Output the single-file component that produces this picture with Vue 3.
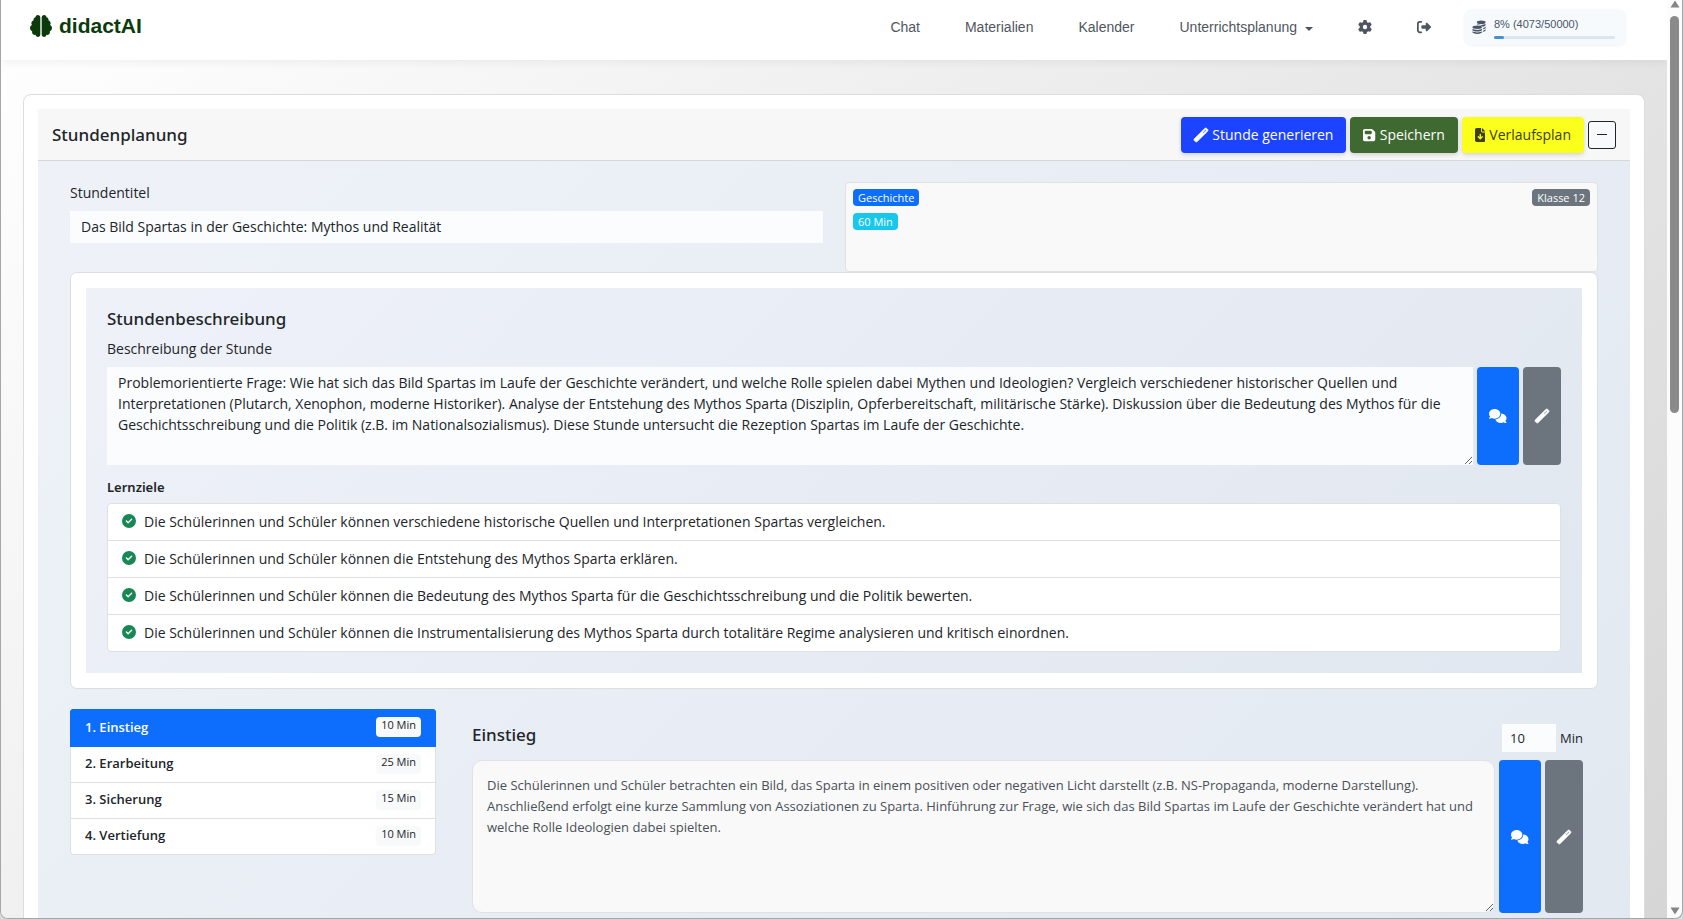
<script setup>
import { ref } from 'vue'

const icons = {
  brain: { box: '0 0 512 512', d: 'M184 0c30.9 0 56 25.1 56 56V456c0 30.9-25.1 56-56 56c-28.9 0-52.7-21.9-55.7-50.1c-5.2 1.4-10.7 2.1-16.3 2.1c-35.3 0-64-28.7-64-64c0-7.4 1.3-14.6 3.6-21.2C21.4 367.4 0 338.2 0 304c0-31.9 18.7-59.5 45.8-72.3C37.1 220.8 32 207 32 192c0-30.7 21.6-56.3 50.4-62.6C80.8 123.9 80 118 80 112c0-29.9 20.6-55.1 48.3-62.1C131.3 21.9 155.1 0 184 0zM328 0c28.9 0 52.6 21.9 55.7 49.9c27.8 7 48.3 32.1 48.3 62.1c0 6-.8 11.9-2.4 17.4c28.8 6.2 50.4 31.9 50.4 62.6c0 15-5.1 28.8-13.8 39.7C493.3 244.5 512 272.1 512 304c0 34.2-21.4 63.4-51.6 74.8c2.3 6.6 3.6 13.8 3.6 21.2c0 35.3-28.7 64-64 64c-5.6 0-11.1-.7-16.3-2.1c-3 28.2-26.8 50.1-55.7 50.1c-30.9 0-56-25.1-56-56V56c0-30.9 25.1-56 56-56z' },
  gear: { box: '0 0 512 512', d: 'M495.9 166.6c3.2 8.7 .5 18.4-6.4 24.6l-43.3 39.4c1.1 8.3 1.7 16.8 1.7 25.4s-.6 17.1-1.7 25.4l43.3 39.4c6.9 6.2 9.6 15.9 6.4 24.6c-4.4 11.9-9.7 23.3-15.8 34.3l-4.7 8.1c-6.6 11-14 21.4-22.1 31.2c-5.9 7.2-15.7 9.6-24.5 6.8l-55.7-17.7c-13.4 10.3-28.2 18.9-44 25.4l-12.5 57.1c-2 9.1-9 16.3-18.2 17.8c-13.8 2.3-28 3.5-42.5 3.5s-28.7-1.2-42.5-3.5c-9.2-1.5-16.2-8.7-18.2-17.8l-12.5-57.1c-15.8-6.5-30.6-15.1-44-25.4L83.1 425.9c-8.8 2.8-18.6 .3-24.5-6.8c-8.1-9.8-15.5-20.2-22.1-31.2l-4.7-8.1c-6.1-11-11.4-22.4-15.8-34.3c-3.2-8.7-.5-18.4 6.4-24.6l43.3-39.4C64.6 273.1 64 264.6 64 256s.6-17.1 1.7-25.4L22.4 191.2c-6.9-6.2-9.6-15.9-6.4-24.6c4.4-11.9 9.7-23.3 15.8-34.3l4.7-8.1c6.6-11 14-21.4 22.1-31.2c5.9-7.2 15.7-9.6 24.5-6.8l55.7 17.7c13.4-10.3 28.2-18.9 44-25.4l12.5-57.1c2-9.1 9-16.3 18.2-17.8C227.3 1.2 241.5 0 256 0s28.7 1.2 42.5 3.5c9.2 1.5 16.2 8.7 18.2 17.8l12.5 57.1c15.8 6.5 30.6 15.1 44 25.4l55.7-17.7c8.8-2.8 18.6-.3 24.5 6.8c8.1 9.8 15.5 20.2 22.1 31.2l4.7 8.1c6.1 11 11.4 22.4 15.8 34.3zM256 336a80 80 0 1 0 0-160 80 80 0 1 0 0 160z' },
  logout: { box: '0 0 512 512', d: 'M377.9 105.9L500.7 228.7c7.2 7.2 11.3 17.1 11.3 27.3s-4.1 20.1-11.3 27.3L377.9 406.1c-6.4 6.4-15 9.9-24 9.9c-18.7 0-33.9-15.2-33.9-33.9l0-62.1-128 0c-17.7 0-32-14.3-32-32l0-64c0-17.7 14.3-32 32-32l128 0 0-62.1c0-18.7 15.2-33.9 33.9-33.9c9 0 17.6 3.6 24 9.9zM160 96L96 96c-17.7 0-32 14.3-32 32l0 256c0 17.7 14.3 32 32 32l64 0c17.7 0 32 14.3 32 32s-14.3 32-32 32l-64 0c-53 0-96-43-96-96L0 128C0 75 43 32 96 32l64 0c17.7 0 32 14.3 32 32s-14.3 32-32 32z' },
  save: { box: '0 0 448 512', d: 'M64 32C28.7 32 0 60.7 0 96V416c0 35.3 28.7 64 64 64H384c35.3 0 64-28.7 64-64V173.3c0-17-6.7-33.3-18.7-45.3L352 50.7C340 38.7 323.7 32 306.7 32H64zm0 96c0-17.7 14.3-32 32-32H288c17.7 0 32 14.3 32 32v64c0 17.7-14.3 32-32 32H96c-17.7 0-32-14.3-32-32V128zM224 288a64 64 0 1 1 0 128 64 64 0 1 1 0-128z' },
  file: { box: '0 0 384 512', d: 'M64 0C28.7 0 0 28.7 0 64V448c0 35.3 28.7 64 64 64H320c35.3 0 64-28.7 64-64V160H256c-17.7 0-32-14.3-32-32V0H64zM256 0V128H384L256 0zM216 232V334.1l31-31c9.4-9.4 24.6-9.4 33.9 0s9.4 24.6 0 33.9l-72 72c-9.4 9.4-24.6 9.4-33.9 0l-72-72c-9.4-9.4-9.4-24.6 0-33.9s24.6-9.4 33.9 0l31 31V232c0-13.3 10.7-24 24-24s24 10.7 24 24z' },
  wand: { box: '0 0 512 512', d: 'M14.1 463.3c-18.7-18.7-18.7-49.1 0-67.9L395.4 14.1c18.7-18.7 49.1-18.7 67.9 0l34.6 34.6c18.7 18.7 18.7 49.1 0 67.9L116.5 497.9c-18.7 18.7-49.1 18.7-67.9 0L14.1 463.3zM347.6 187.6l105-105L429.4 59.3l-105 105 23.3 23.3z' },
  chat: { box: '0 0 640 512', d: 'M208 352c114.9 0 208-78.8 208-176S322.9 0 208 0S0 78.8 0 176c0 38.6 14.7 74.3 39.6 103.4c-3.5 9.4-8.7 17.7-14.2 24.7c-4.8 6.2-9.7 11-13.3 14.3c-1.8 1.6-3.3 2.9-4.3 3.7c-.5 .4-.9 .7-1.1 .8l-.2 .2C1 327.2-1.4 334.4 .8 340.9S9.1 352 16 352c21.8 0 43.8-5.6 62.1-12.5c9.2-3.5 17.8-7.4 25.3-11.4C134.1 343.3 169.8 352 208 352zM448 176c0 112.3-99.1 196.9-216.5 207C255.8 457.4 336.4 512 432 512c38.2 0 73.9-8.7 104.7-23.9c7.5 4 16 7.9 25.2 11.4c18.3 6.9 40.3 12.5 62.1 12.5c6.9 0 13.1-4.5 15.2-11.1c2.1-6.6-.2-13.8-5.8-17.9l-.2-.2c-.2-.2-.6-.4-1.1-.8c-1-.8-2.5-2-4.3-3.7c-3.6-3.3-8.5-8.1-13.3-14.3c-5.5-7-10.7-15.4-14.2-24.7c24.9-29 39.6-64.7 39.6-103.4c0-92.8-84.9-168.9-192.6-175.5c.4 5.1 .6 10.3 .6 15.5z' },
  check: { box: '0 0 512 512', d: 'M256 512A256 256 0 1 0 256 0a256 256 0 1 0 0 512zM369 209L241 337c-9.4 9.4-24.6 9.4-33.9 0l-64-64c-9.4-9.4-9.4-24.6 0-33.9s24.6-9.4 33.9 0l47 47L335 175c9.4-9.4 24.6-9.4 33.9 0s9.4 24.6 0 33.9z' }
}

const goals = [
  'Die Schülerinnen und Schüler können verschiedene historische Quellen und Interpretationen Spartas vergleichen.',
  'Die Schülerinnen und Schüler können die Entstehung des Mythos Sparta erklären.',
  'Die Schülerinnen und Schüler können die Bedeutung des Mythos Sparta für die Geschichtsschreibung und die Politik bewerten.',
  'Die Schülerinnen und Schüler können die Instrumentalisierung des Mythos Sparta durch totalitäre Regime analysieren und kritisch einordnen.'
]

const phases = [
  { name: '1. Einstieg', minutes: 10 },
  { name: '2. Erarbeitung', minutes: 25 },
  { name: '3. Sicherung', minutes: 15 },
  { name: '4. Vertiefung', minutes: 10 }
]
const active = ref(0)

const title = ref('Das Bild Spartas in der Geschichte: Mythos und Realität')
const description = ref('Problemorientierte Frage: Wie hat sich das Bild Spartas im Laufe der Geschichte verändert, und welche Rolle spielen dabei Mythen und Ideologien? Vergleich verschiedener historischer Quellen und Interpretationen (Plutarch, Xenophon, moderne Historiker). Analyse der Entstehung des Mythos Sparta (Disziplin, Opferbereitschaft, militärische Stärke). Diskussion über die Bedeutung des Mythos für die Geschichtsschreibung und die Politik (z.B. im Nationalsozialismus). Diese Stunde untersucht die Rezeption Spartas im Laufe der Geschichte.')
const phaseText = ref('Die Schülerinnen und Schüler betrachten ein Bild, das Sparta in einem positiven oder negativen Licht darstellt (z.B. NS-Propaganda, moderne Darstellung). Anschließend erfolgt eine kurze Sammlung von Assoziationen zu Sparta. Hinführung zur Frage, wie sich das Bild Spartas im Laufe der Geschichte verändert hat und welche Rolle Ideologien dabei spielten.')
const duration = ref('10')

const used = 4073
const quota = 50000
const percent = Math.round((used / quota) * 100)
</script>

<template>
  <div class="window">
    <div class="page">
      <header class="navbar">
        <a class="brand" href="#">
          <svg class="brand-icon" :viewBox="icons.brain.box" aria-hidden="true"><path :d="icons.brain.d" /></svg>
          <span>didactAI</span>
        </a>
        <nav class="menu">
          <a href="#">Chat</a>
          <a href="#">Materialien</a>
          <a href="#">Kalender</a>
          <a href="#" class="dropdown">Unterrichtsplanung<span class="caret"></span></a>
          <a href="#" aria-label="Einstellungen"><svg class="icon" :viewBox="icons.gear.box"><path :d="icons.gear.d" /></svg></a>
          <a href="#" aria-label="Abmelden"><svg class="icon" :viewBox="icons.logout.box"><path :d="icons.logout.d" /></svg></a>
        </nav>
        <div class="quota">
          <svg class="icon" viewBox="0 0 16 16" aria-hidden="true">
            <ellipse cx="10.5" cy="2.6" rx="5" ry="2.1" />
            <path d="M15.5 4.3v1.4c0 1-1.3 1.7-3.2 2.1-.9-1.4-3.1-2-5.3-2.1-.9-.4-1.4-.9-1.5-1.4 1 .9 3 1.3 5 1.3s4-.4 5-1.3z" />
            <path d="M15.5 7.4v1.4c0 .9-1 1.5-2.7 1.9V9.1c1.2-.3 2.2-.9 2.7-1.7z" />
            <path d="M15.5 10.4v1.4c0 .9-1 1.5-2.7 1.9v-1.6c1.2-.3 2.2-.9 2.7-1.7z" />
            <ellipse cx="6" cy="8.3" rx="5.5" ry="1.9" />
            <path d="M.5 10c1.1.9 3.3 1.3 5.5 1.3s4.4-.4 5.5-1.3v1.3c0 1-2.5 1.8-5.5 1.8S.5 12.3.5 11.3z" />
            <path d="M.5 12.9c1.1.9 3.3 1.3 5.5 1.3s4.4-.4 5.5-1.3v1.2c0 1-2.5 1.8-5.5 1.8S.5 15.1.5 14.1z" />
          </svg>
          <div class="quota-info">
            <span>{{ percent }}% ({{ used }}/{{ quota }})</span>
            <div class="track"><div class="fill" :style="{ width: percent + '%' }"></div></div>
          </div>
        </div>
      </header>

      <main class="card">
        <div class="card-header">
          <h1>Stundenplanung</h1>
          <div class="actions">
            <button type="button" class="btn generate"><svg class="wand" :viewBox="icons.wand.box"><path :d="icons.wand.d" /></svg>Stunde generieren</button>
            <button type="button" class="btn save"><svg :viewBox="icons.save.box"><path :d="icons.save.d" /></svg>Speichern</button>
            <button type="button" class="btn plan"><svg :viewBox="icons.file.box"><path :d="icons.file.d" /></svg>Verlaufsplan</button>
            <button type="button" class="collapse" aria-label="Einklappen"><span></span></button>
          </div>
        </div>

        <div class="card-body">
          <div class="top-row">
            <div class="field">
              <label for="title">Stundentitel</label>
              <input id="title" v-model="title" type="text" />
            </div>
            <div class="meta">
              <div class="meta-line">
                <span class="badge subject">Geschichte</span>
                <span class="badge grade">Klasse 12</span>
              </div>
              <div class="meta-line"><span class="badge length">60 Min</span></div>
            </div>
          </div>

          <section class="inner-card">
            <div class="inner-body">
              <h2>Stundenbeschreibung</h2>
              <label for="description">Beschreibung der Stunde</label>
              <div class="editor">
                <textarea id="description" v-model="description" class="plain" spellcheck="false"></textarea>
                <button type="button" class="side chat" aria-label="Chat öffnen"><svg :viewBox="icons.chat.box"><path :d="icons.chat.d" /></svg></button>
                <button type="button" class="side edit" aria-label="Bearbeiten"><svg class="wand" :viewBox="icons.wand.box"><path :d="icons.wand.d" /></svg></button>
              </div>
              <h3>Lernziele</h3>
              <ul class="goals">
                <li v-for="goal in goals" :key="goal">
                  <svg :viewBox="icons.check.box" aria-hidden="true"><path :d="icons.check.d" /></svg>
                  <span>{{ goal }}</span>
                </li>
              </ul>
            </div>
          </section>

          <div class="phase-row">
            <div class="phases">
              <button
                v-for="(phase, i) in phases"
                :key="phase.name"
                type="button"
                :class="{ active: i === active }"
                @click="active = i"
              >
                <span>{{ phase.name }}</span>
                <span class="minutes">{{ phase.minutes }} Min</span>
              </button>
            </div>
            <section class="detail">
              <div class="detail-head">
                <h2><label for="phase-text">Einstieg</label></h2>
                <div class="duration">
                  <input id="duration" v-model="duration" type="text" inputmode="numeric" />
                  <label for="duration">Min</label>
                </div>
              </div>
              <div class="editor phase-editor">
                <textarea id="phase-text" v-model="phaseText" class="rounded" spellcheck="false"></textarea>
                <button type="button" class="side chat" aria-label="Chat öffnen"><svg :viewBox="icons.chat.box"><path :d="icons.chat.d" /></svg></button>
                <button type="button" class="side edit" aria-label="Bearbeiten"><svg class="wand" :viewBox="icons.wand.box"><path :d="icons.wand.d" /></svg></button>
              </div>
            </section>
          </div>
        </div>
      </main>
    </div>

    <div class="scrollbar" aria-hidden="true">
      <svg viewBox="0 0 10 8"><path d="M5 .5 9.5 7.5H.5z" /></svg>
      <div class="rail"><div class="thumb"></div></div>
      <svg viewBox="0 0 10 8"><path d="M5 7.5 9.5.5H.5z" /></svg>
    </div>
  </div>
</template>

<style>
html,
body {
  margin: 0;
  background: #d9dadb;
}
</style>

<style scoped>
* {
  box-sizing: border-box;
}

.window {
  display: flex;
  height: 100vh;
  overflow: hidden;
  border: 1px solid #a5a6a8;
  border-top: 0;
  border-radius: 0 0 8px 8px;
  background: #fcfcfc;
  color: #212529;
  font-family: "Open Sans", "Noto Sans", sans-serif;
  font-size: 14px;
  line-height: 21px;
}

.page {
  flex: 1;
  min-width: 0;
  overflow: hidden;
  background: linear-gradient(135deg, #ffffff 0%, #d6d6d6 100%);
}

h1,
h2,
h3 {
  margin: 0;
  font-family: "Noto Sans", "Open Sans", sans-serif;
  font-size: 17px;
  font-weight: 500;
  line-height: 24px;
}

h3 {
  font-size: 13px;
  font-weight: 600;
  line-height: 21px;
}

button,
input,
textarea {
  margin: 0;
  border: 0;
  color: inherit;
  font: inherit;
}

svg {
  flex: none;
  fill: currentColor;
}

.wand {
  stroke: currentColor;
  stroke-width: 24;
  overflow: visible;
}

/* Navigation */
.navbar {
  display: flex;
  align-items: center;
  height: 60px;
  padding: 0 41px 6px 29px;
  background: #fff;
  box-shadow: 0 2px 8px rgba(0, 0, 0, 0.06);
  font-family: "Liberation Sans", Arial, sans-serif;
}

.navbar a {
  display: flex;
  align-items: center;
  color: #4f5660;
  text-decoration: none;
}

.navbar .brand {
  gap: 7px;
  margin-right: auto;
  padding-bottom: 3px;
  color: #0b3a0b;
  font-size: 21px;
  font-weight: 700;
}

.brand-icon {
  width: 22px;
  height: 22px;
}

.menu {
  display: flex;
  align-items: center;
  gap: 45px;
  margin-right: 33px;
}

.caret {
  margin: 3px 0 0 8px;
  border: 4px solid transparent;
  border-top-color: currentColor;
  border-bottom: 0;
}

.icon {
  width: 14px;
  height: 14px;
}

.quota {
  display: flex;
  align-items: center;
  gap: 8px;
  width: 162px;
  height: 36px;
  padding: 0 11px 0 8px;
  border-radius: 8px;
  background: #f7fafc;
  box-shadow: 0 1px 3px rgba(0, 0, 0, 0.05);
  color: #4a5568;
  font-size: 11px;
  line-height: 16px;
}

.quota-info {
  flex: 1;
}

.track {
  height: 3px;
  margin-top: 4px;
  border-radius: 2px;
  background: #dfe5ec;
}

.fill {
  height: 3px;
  border-radius: 2px;
  background: #4590d0;
}

/* Main card */
.card {
  margin: 34px 22px 0;
  padding: 14px;
  border: 1px solid #dcdddf;
  border-radius: 8px;
  background: #fff;
}

.card-header {
  display: flex;
  align-items: center;
  justify-content: space-between;
  height: 52px;
  padding: 0 14px;
  border-bottom: 1px solid #d5d8da;
  background: #f7f7f7;
}

.actions {
  display: flex;
  align-items: center;
  gap: 4px;
}

.btn {
  display: flex;
  align-items: center;
  gap: 4px;
  height: 36px;
  padding: 0 13px;
  border-radius: 4px;
  box-shadow: 0 2px 4px rgba(0, 0, 0, 0.14);
  color: #fff;
}

.btn svg {
  height: 14px;
}

.generate {
  background: #1c43ff;
}

.save {
  background: #3e6930;
}

.plan {
  background: #fbff1c;
  color: #3c4014;
}

.collapse {
  display: grid;
  place-items: center;
  width: 28px;
  height: 28px;
  padding: 0;
  border: 1px solid #212529;
  border-radius: 3px;
  background: #f8f9fa;
}

.collapse span {
  width: 10px;
  height: 1px;
  background: #212529;
}

.card-body {
  height: 920px;
  padding: 21px 32px;
  background: linear-gradient(135deg, #eef2f8 0%, #e2e8f1 100%);
}

.top-row {
  display: grid;
  grid-template-columns: 1fr 1fr;
  gap: 22px;
}

.field label,
.inner-body label {
  display: block;
}

.field input {
  width: 100%;
  height: 32px;
  margin-top: 8px;
  padding: 0 11px 2px;
  background: #fafcfe;
}

.meta {
  height: 90px;
  padding: 6px 7px;
  border: 1px solid #dfe1e3;
  border-radius: 4px;
  background: #f9f9f9;
}

.meta-line {
  display: flex;
  justify-content: space-between;
  margin-bottom: 7px;
}

.badge {
  padding: 0 5px;
  border-radius: 4px;
  color: #fff;
  font-size: 11px;
  line-height: 17px;
}

.subject {
  background: #0d6efd;
}

.grade {
  background: #6c757d;
}

.length {
  background: #17c8ec;
}

.inner-card {
  padding: 15px;
  border: 1px solid #dcdfe2;
  border-radius: 7px;
  background: #fff;
}

.inner-body {
  padding: 19px 21px 21px;
  background: linear-gradient(135deg, #eef1f8 0%, #e1e7f0 100%);
}

.inner-body label {
  margin: 7px 0 8px;
}

.editor {
  display: flex;
  height: 98px;
}

textarea {
  flex: 1;
  min-width: 0;
  resize: vertical;
  outline: 0;
}

.plain {
  padding: 5px 11px;
  background: #fafcfe;
}

.side {
  display: grid;
  place-items: center;
  width: 38px;
  margin-left: 4px;
  padding: 0;
  border-radius: 4px;
  background: #6c757d;
  color: #fff;
}

.side svg {
  height: 14px;
}

.side.chat {
  width: 42px;
  background: #0d6efd;
}

.inner-body h3 {
  margin: 12px 0 5px;
}

.goals {
  margin: 0;
  padding: 0;
  border: 1px solid #dee0e2;
  border-radius: 4px;
  background: #fff;
  list-style: none;
}

.goals li {
  display: flex;
  align-items: center;
  gap: 8px;
  height: 36px;
  padding: 0 14px 2px;
}

.goals li + li {
  height: 37px;
  border-top: 1px solid #dee0e2;
}

.goals svg {
  width: 14px;
  color: #198754;
}

/* Phases */
.phase-row {
  display: grid;
  grid-template-columns: 366px 1fr;
  align-items: start;
  gap: 36px;
  margin-top: 20px;
}

.phases {
  display: flex;
  flex-direction: column;
  overflow: hidden;
  border-radius: 4px;
}

.phases button {
  display: flex;
  align-items: center;
  justify-content: space-between;
  height: 36px;
  padding: 0 14px 2px;
  border: 1px solid #dee0e2;
  border-top: 0;
  background: #fff;
  font-size: 13px;
  font-weight: 600;
  text-align: left;
}

.phases button:first-child {
  height: 38px;
  border-top: 1px solid #dee0e2;
}

.phases button:last-child {
  border-radius: 0 0 4px 4px;
}

.phases button.active {
  border-color: #0d6efd;
  background: #0d6efd;
  color: #fff;
}

.minutes {
  height: 20px;
  padding: 0 5px;
  border-radius: 4px;
  background: #f8f9fa;
  color: #212529;
  font-size: 11px;
  font-weight: 400;
  line-height: 15px;
}

.detail {
  padding: 15px 15px 0 0;
}

.detail-head {
  display: flex;
  align-items: flex-start;
  justify-content: space-between;
  margin-bottom: 8px;
}

.detail-head h2 {
  line-height: 22px;
}

.duration {
  display: flex;
  align-items: center;
  gap: 4px;
  font-size: 13px;
}

.duration input {
  width: 54px;
  height: 28px;
  padding: 0 8px;
  background: #fafcfe;
}

.phase-editor {
  height: 153px;
}

.rounded {
  padding: 14px;
  border: 1px solid #dfe2e6;
  border-radius: 10px;
  background: #f9f9f9;
  color: #495057;
  font-size: 13px;
}

/* Scrollbar */
.scrollbar {
  display: flex;
  flex-direction: column;
  align-items: center;
  width: 15px;
  padding-bottom: 3px;
}

.scrollbar svg {
  width: 10px;
  height: 8px;
  fill: #858585;
}

.rail {
  flex: 1;
  width: 9px;
  padding: 8px 0;
}

.thumb {
  height: 45%;
  border-radius: 5px;
  background: #8a8a8a;
}
</style>
